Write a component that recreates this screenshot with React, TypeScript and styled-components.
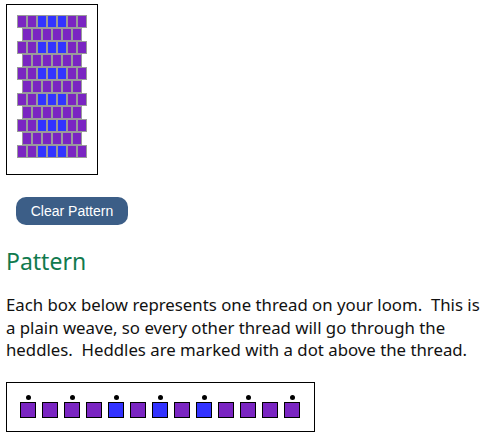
import React from 'react';
import styled, { createGlobalStyle } from 'styled-components';

const GlobalStyle = createGlobalStyle`
  body {
    margin: 0;
    background: #ffffff;
    font-family: "Noto Sans", "Liberation Sans", sans-serif;
  }
`;

const PURPLE = '#7a25c2';
const BLUE = '#3333ff';

// warp thread colours, left to right
const threads = ['p', 'p', 'p', 'p', 'b', 'p', 'b', 'p', 'b', 'p', 'p', 'p', 'p'];

const Page = styled.div`
  padding: 4px 6px 0;
  color: #111;
`;

const WeaveBox = styled.div`
  width: 90px;
  border: 1px solid #000;
  padding: 10px 0 16px;
  display: flex;
  flex-direction: column;
  align-items: center;
`;

const WeaveRow = styled.div`
  display: flex;
`;

const Cell = styled.div<{ $color: string }>`
  width: 8px;
  height: 11px;
  border: 1px solid #9a9a9a;
  background: ${(p) => p.$color};
`;

const ClearButton = styled.button`
  display: block;
  margin: 22px 0 0 10px;
  width: 112px;
  height: 28px;
  border: none;
  border-radius: 10px;
  background: #3c5e87;
  color: #ffffff;
  font-family: "Liberation Sans", Arial, sans-serif;
  font-size: 14px;
  padding: 0;
`;

const Heading = styled.h2`
  margin: 22px 0 0;
  font-size: 23px;
  line-height: 28px;
  font-weight: 400;
  color: #117a4e;
`;

const Text = styled.p`
  margin: 19px 0 0;
  font-size: 16.8px;
  line-height: 22.7px;
  white-space: nowrap;
`;

const ThreadBox = styled.div`
  width: 294px;
  height: 36px;
  margin-top: 20px;
  border: 1px solid #000;
  padding: 12px 0 0 13px;
  display: flex;
  gap: 6px;
`;

const Thread = styled.div`
  display: flex;
  flex-direction: column;
  align-items: center;
`;

const Dot = styled.div<{ $show: boolean }>`
  width: 5px;
  height: 5px;
  margin-bottom: 2px;
  border-radius: 50%;
  background: #000;
  visibility: ${(p) => (p.$show ? 'visible' : 'hidden')};
`;

const Square = styled.div<{ $color: string }>`
  width: 14px;
  height: 14px;
  border: 1px solid #000;
  background: ${(p) => p.$color};
`;

const fullRow = [PURPLE, PURPLE, BLUE, BLUE, BLUE, PURPLE, PURPLE];
const offsetRow = [PURPLE, PURPLE, PURPLE, PURPLE, PURPLE, PURPLE];

export default function App() {
  const rows = Array.from({ length: 11 }, (_, i) => (i % 2 === 0 ? fullRow : offsetRow));
  return (
    <Page>
      <GlobalStyle />
      <WeaveBox>
        {rows.map((row, r) => (
          <WeaveRow key={r}>
            {row.map((c, i) => (
              <Cell key={i} $color={c} />
            ))}
          </WeaveRow>
        ))}
      </WeaveBox>
      <ClearButton>Clear Pattern</ClearButton>
      <Heading>Pattern</Heading>
      <Text>
        Each box below represents one thread on your loom.&nbsp; This is
        <br />
        a plain weave, so every other thread will go through the
        <br />
        heddles.&nbsp; Heddles are marked with a dot above the thread.
      </Text>
      <ThreadBox>
        {threads.map((t, i) => (
          <Thread key={i}>
            <Dot $show={i % 2 === 0} />
            <Square $color={t === 'b' ? BLUE : PURPLE} />
          </Thread>
        ))}
      </ThreadBox>
    </Page>
  );
}
